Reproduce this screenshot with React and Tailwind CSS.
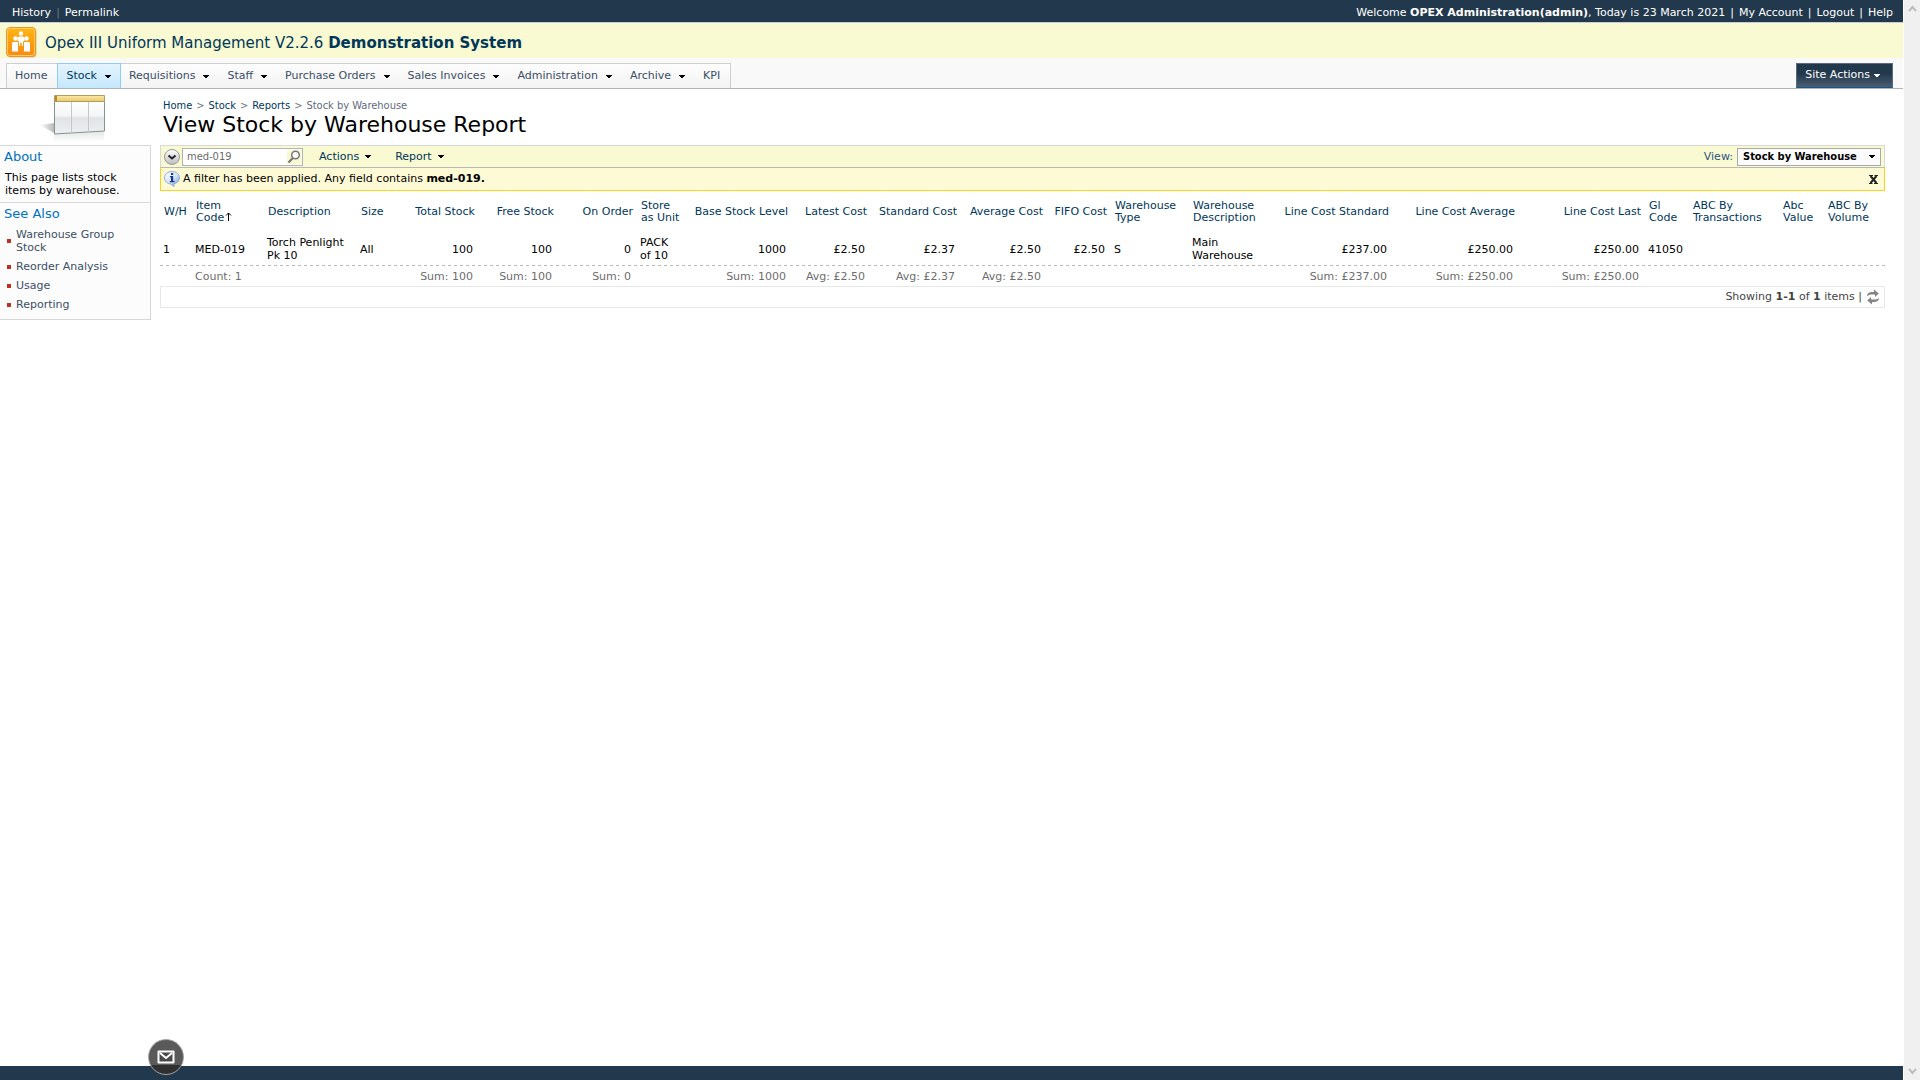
import React from "react";

const SANS = "font-['DejaVu_Sans',Verdana,sans-serif]";
const NARROW = "font-['DejaVu_Sans_Condensed','DejaVu_Sans',Tahoma,sans-serif]";

function Caret({ className = "" }) {
  return (
    <svg width="6" height="4" viewBox="0 0 6 4" className={"shrink-0 " + className} shapeRendering="crispEdges" aria-hidden="true">
      <path d="M0 0h6v1H5v1H4v1H2V2H1V1H0z" fill="currentColor" />
    </svg>
  );
}

function PeopleLogo() {
  return (
    <svg width="32" height="32" viewBox="0 0 32 32" className="self-end" aria-hidden="true">
      <defs>
        <linearGradient id="logo" x1="0" y1="0" x2="0" y2="1">
          <stop offset="0" stopColor="#fcb813" />
          <stop offset="0.6" stopColor="#fb9a0e" />
          <stop offset="1" stopColor="#f98a1a" />
        </linearGradient>
      </defs>
      <rect x="1.5" y="2" width="29" height="29.500" rx="4" fill="#c9c9a8" />
      <rect x="0.5" y="1.5" width="29" height="29" rx="3.5" fill="url(#logo)" stroke="#e9962a" />
      <rect x="1.5" y="2.5" width="27" height="27" rx="2.5" fill="none" stroke="#ffc964" />
      <g fill="#fff">
        <circle cx="9.500" cy="12.500" r="2.200" />
        <circle cx="15" cy="7.500" r="2.200" />
        <circle cx="20.500" cy="12.500" r="2.200" />
        <path d="M6.500 16h5.500v9.500H6V17zM18 16h5.500l.5 1v8.500h-6z" />
        <path d="M11.500 11.500L13 10.500h4l1.500 1v3L17 15.500V20h-1.200v-3h-1.600v3H13v-4.500l-1.500-1z" />
      </g>
    </svg>
  );
}

function ListPicture() {
  return (
    <svg width="68" height="48" viewBox="0 0 68 48" aria-hidden="true">
      <defs>
        <linearGradient id="gold" x1="0" y1="0" x2="0" y2="1">
          <stop offset="0" stopColor="#fbe9a8" />
          <stop offset="1" stopColor="#ecc867" />
        </linearGradient>
        <linearGradient id="pane" x1="0" y1="0" x2="0" y2="1">
          <stop offset="0" stopColor="#ffffff" />
          <stop offset="0.450" stopColor="#f4f5f6" />
          <stop offset="0.500" stopColor="#e2e3e7" />
          <stop offset="1" stopColor="#eeeff2" />
        </linearGradient>
        <linearGradient id="castLeft" x1="1" y1="0" x2="0" y2="0">
          <stop offset="0" stopColor="#b9b9b9" />
          <stop offset="1" stopColor="#ffffff" />
        </linearGradient>
        <linearGradient id="mirror" x1="0" y1="0" x2="0" y2="1">
          <stop offset="0" stopColor="#c5cccb" />
          <stop offset="1" stopColor="#ffffff" />
        </linearGradient>
      </defs>
      <path d="M14 29L0 31l14 8z" fill="url(#castLeft)" />
      <path d="M14 40l50-3v9l-50 2z" fill="url(#mirror)" opacity="0.500" />
      <path d="M14.500 7.500h50V37l-50 3z" fill="url(#pane)" stroke="#83938d" />
      <path d="M31.500 8v31M48.500 8v30" stroke="#c3c8c9" />
      <path d="M14.500 1.500h50v6h-50z" fill="url(#gold)" stroke="#b49c61" />
      <path d="M15 2h2v5h-2z" fill="#b58a2c" />
    </svg>
  );
}

function RoundArrow() {
  return (
    <svg width="16" height="16" viewBox="0 0 16 16" aria-hidden="true">
      <defs>
        <linearGradient id="knob" x1="0" y1="0" x2="0" y2="1">
          <stop offset="0" stopColor="#ffffff" />
          <stop offset="1" stopColor="#bdbdbd" />
        </linearGradient>
      </defs>
      <circle cx="8" cy="8" r="7.500" fill="url(#knob)" stroke="#9b9b9b" />
      <path d="M4.500 6.500L8 9.500l3.500-3" fill="none" stroke="#222" strokeWidth="2" />
    </svg>
  );
}

function Magnifier() {
  return (
    <svg width="14" height="14" viewBox="0 0 14 14" aria-hidden="true">
      <rect width="14" height="14" fill="#f9f9d2" />
      <circle cx="8.500" cy="5" r="3.800" fill="#fff" stroke="#777" strokeWidth="1.500" />
      <path d="M5.800 8L1.500 12.500" stroke="#777" strokeWidth="2.200" />
    </svg>
  );
}

function InfoBubble() {
  return (
    <svg width="16" height="16" viewBox="0 0 16 16" aria-hidden="true">
      <defs>
        <linearGradient id="bubble" x1="0" y1="0" x2="1" y2="1">
          <stop offset="0" stopColor="#ffffff" />
          <stop offset="0.500" stopColor="#dbe7f8" />
          <stop offset="1" stopColor="#6f9bdc" />
        </linearGradient>
      </defs>
      <path d="M8 .5c4.200 0 7.500 2.700 7.500 6.200 0 3.100-2.400 5.400-5.500 6L10 15.500 6.800 13C3.200 12.600.5 10 .5 6.700.5 3.200 3.800.5 8 .5z" fill="url(#bubble)" stroke="#8fa9d3" />
      <path d="M7 2h2.200v2H7zM6 5h3.200v5H10.500v1.200H5.800V10H7V6.200H6z" fill="#12388f" />
    </svg>
  );
}

function Refresh() {
  return (
    <svg width="14" height="16" viewBox="0 0 14 16" aria-hidden="true" fill="#858585">
      <path d="M1 7C1 4 4 2.500 8 3V.5L12.800 4.500 9 8V5.800C5.500 5 3 5.500 1 7z" />
      <path d="M13 9c0 3-3 4.500-7 4v2.500L1.200 11.500 5 8v2.200c3.500.8 6 .3 8-1.200z" />
    </svg>
  );
}

const tabs = [
  { label: "Home" },
  { label: "Stock", menu: true, active: true },
  { label: "Requisitions", menu: true },
  { label: "Staff", menu: true },
  { label: "Purchase Orders", menu: true },
  { label: "Sales Invoices", menu: true },
  { label: "Administration", menu: true },
  { label: "Archive", menu: true },
  { label: "KPI" },
];

const columns = [
  { head: ["W/H"], w: "w-[32px]", value: "1" },
  { head: ["Item", "Code"], w: "w-[72px]", value: "MED-019", total: "Count: 1", sorted: true },
  { head: ["Description"], w: "w-[93px]", value: "Torch Penlight Pk 10" },
  { head: ["Size"], w: "w-[47px]", value: "All" },
  { head: ["Total Stock"], w: "w-[75px]", value: "100", total: "Sum: 100", right: true },
  { head: ["Free Stock"], w: "w-[79px]", value: "100", total: "Sum: 100", right: true },
  { head: ["On Order"], w: "w-[79px]", value: "0", total: "Sum: 0", right: true },
  { head: ["Store", "as Unit"], w: "w-[49px]", value: "PACK of 10" },
  { head: ["Base Stock Level"], w: "w-[106px]", value: "1000", total: "Sum: 1000", right: true },
  { head: ["Latest Cost"], w: "w-[79px]", value: "£2.50", total: "Avg: £2.50", right: true },
  { head: ["Standard Cost"], w: "w-[90px]", value: "£2.37", total: "Avg: £2.37", right: true },
  { head: ["Average Cost"], w: "w-[86px]", value: "£2.50", total: "Avg: £2.50", right: true },
  { head: ["FIFO Cost"], w: "w-[64px]", value: "£2.50", right: true },
  { head: ["Warehouse", "Type"], w: "w-[78px]", value: "S" },
  { head: ["Warehouse", "Description"], w: "w-[81px]", value: "Main Warehouse" },
  { head: ["Line Cost Standard"], w: "w-[123px]", value: "£237.00", total: "Sum: £237.00", right: true },
  { head: ["Line Cost Average"], w: "w-[126px]", value: "£250.00", total: "Sum: £250.00", right: true },
  { head: ["Line Cost Last"], w: "w-[126px]", value: "£250.00", total: "Sum: £250.00", right: true },
  { head: ["Gl", "Code"], w: "w-[44px]", value: "41050" },
  { head: ["ABC By", "Transactions"], w: "w-[90px]", value: "" },
  { head: ["Abc", "Value"], w: "w-[45px]", value: "" },
  { head: ["ABC By", "Volume"], w: "w-[61px]", value: "" },
];

function TopBar() {
  return (
    <div className="flex h-[23px] items-center justify-between border-b border-[#c3d0dc] bg-[#22384d] pt-1 pr-[10px] pl-3 text-white">
      <div className="flex items-center">
        <a href="#history">History</a>
        <span className="px-[5px] text-[#6b7885]">|</span>
        <a href="#permalink">Permalink</a>
      </div>
      <div className="flex items-center gap-[5px]">
        <span>Welcome <b>OPEX Administration(admin)</b>, Today is 23 March 2021</span>
        <span>|</span>
        <a href="#account">My Account</a>
        <span>|</span>
        <a href="#logout">Logout</a>
        <span>|</span>
        <a href="#help">Help</a>
      </div>
    </div>
  );
}

function NavBar() {
  return (
    <div className="flex h-[31px] items-end justify-between border-b border-[#b3b3b3] bg-[#f9f9f9] pr-[10px] pl-[6px]">
      <nav className="flex h-[25px] items-stretch border-x border-t border-[#cfcfcf] bg-linear-to-b from-[#fdfdfd] to-[#f3f3f3] text-[#3b4f65]">
        {tabs.map((t) =>
          t.active ? (
            <button key={t.label} className="-mt-px flex items-center gap-2 border border-b-0 border-[#91cdf2] bg-linear-to-b from-[#e4f4fe] to-[#c4e8fd] pt-px pr-[9px] pl-2 text-[#003759]">
              {t.label}
              <Caret className="text-black" />
            </button>
          ) : t.menu ? (
            <button key={t.label} className="flex items-center gap-2 pt-px pr-[10px] pl-2">
              {t.label}
              <Caret className="text-black" />
            </button>
          ) : (
            <a key={t.label} href={"#" + t.label} className="flex items-center pt-px pr-[10px] pl-2">
              {t.label}
            </a>
          )
        )}
      </nav>
      <button className="flex h-[25px] items-center gap-1 border border-[#5a6b7c] border-b-[#0b5a94] bg-linear-to-b from-[#22384d] from-40% to-[#4c5d6f] pr-3 pl-2 text-white">
        Site Actions
        <Caret />
      </button>
    </div>
  );
}

function SideBar() {
  const links = ["Warehouse Group Stock", "Reorder Analysis", "Usage", "Reporting"];
  return (
    <aside className="w-[151px] shrink-0">
      <div className="flex h-[56px] items-start pt-[5px] pl-[40px]">
        <ListPicture />
      </div>
      <div className="border border-l-0 border-[#d8d8d8] bg-[#fcfcfc]">
        <section className="h-[57px] border-b border-[#d8d8d8] pt-[3px] pl-1">
          <h2 className="text-[13px] leading-4 text-[#0072bc]">About</h2>
          <p className="pt-[6px] pr-4 pl-px leading-[13px] text-black">This page lists stock items by warehouse.</p>
        </section>
        <section className="pt-[3px] pb-2 pl-1">
          <h2 className="text-[13px] leading-4 text-[#0072bc]">See Also</h2>
          <ul className="flex flex-col gap-[6px] pt-[6px]">
            {links.map((l) => (
              <li key={l} className="flex items-center gap-[5px] pr-5 pl-[3px] leading-[13px]">
                <span className="h-1 w-1 shrink-0 bg-[#c2301c]" />
                <a href={"#" + l} className="text-[#3b4f65]">{l}</a>
              </li>
            ))}
          </ul>
        </section>
      </div>
    </aside>
  );
}

function ToolBar() {
  return (
    <div className="flex h-[22px] items-center border-x border-t border-[#d8d8d8] bg-[#f9f9d2] text-[#003759]">
      <button aria-label="Search options" className="ml-[3px]"><RoundArrow /></button>
      <div className="ml-[2px] flex h-[18px] w-[121px] items-center border border-[#b3b3b3] bg-white pr-px">
        <input aria-label="Search" defaultValue="med-019" className={"min-w-0 flex-1 pt-px pl-1 text-[#6b6b6b] outline-none " + NARROW} />
        <button aria-label="Find"><Magnifier /></button>
      </div>
      <button className="ml-4 flex items-center gap-[6px] pt-px">Actions <Caret className="text-black" /></button>
      <button className="ml-6 flex items-center gap-[6px] pt-px">Report <Caret className="text-black" /></button>
      <label htmlFor="view" className="ml-auto pt-px pr-1 text-[#2a5580]">View:</label>
      <div className="relative mr-[3px] flex items-center text-black">
        <select id="view" className={"h-[18px] w-[144px] appearance-none border border-[#aaaaaa] bg-[#fbfbfb] pl-[5px] text-[11px] font-bold " + NARROW}>
          <option>Stock by Warehouse</option>
        </select>
        <Caret className="pointer-events-none absolute right-[6px]" />
      </div>
    </div>
  );
}

function ReportTable() {
  return (
    <table className="w-full table-fixed border-collapse">
      <thead>
        <tr className="h-[41px] leading-3 text-[#003759]">
          {columns.map((c, i) => (
            <th key={i} scope="col" className={"px-1 align-middle font-normal whitespace-nowrap " + c.w + (c.right ? " text-right" : " text-left")}>
              {c.head.map((h, k) => (
                <span key={k} className="block">
                  {h}
                  {c.sorted && k === 1 && (
                    <svg width="7" height="9" viewBox="0 0 7 9" className="ml-px inline-block align-baseline" aria-hidden="true">
                      <path d="M3.500 9V1M1 3.500L3.500 1 6 3.500" fill="none" stroke="#000" />
                    </svg>
                  )}
                </span>
              ))}
            </th>
          ))}
        </tr>
      </thead>
      <tbody>
        <tr className="h-[34px] bg-[repeating-linear-gradient(90deg,#b9b9b9_0_3px,transparent_3px_6px)] bg-[length:100%_1px] bg-bottom bg-no-repeat leading-[13px] text-black">
          {columns.map((c, i) => (
            <td key={i} className={"pr-[6px] pl-[3px] align-middle" + (c.right ? " text-right" : "")}>{c.value}</td>
          ))}
        </tr>
      </tbody>
      <tfoot>
        <tr className="h-[20px] leading-[13px] text-[#6d6d6d]">
          {columns.map((c, i) => (
            <td key={i} className={"pt-px pr-[6px] pl-[3px] align-middle whitespace-nowrap" + (c.right ? " text-right" : "")}>{c.total}</td>
          ))}
        </tr>
      </tfoot>
    </table>
  );
}

export default function App() {
  return (
    <div className={"flex min-h-screen bg-white text-[11px] " + SANS}>
      <div className="flex min-w-0 flex-1 flex-col">
        <header>
          <TopBar />
          <div className="flex h-[35px] items-center gap-[7px] bg-[#f9f9d2] pl-[6px] text-[15px] text-[#003759]">
            <PeopleLogo />
            <p className="pt-[5px]">Opex III Uniform Management V2.2.6 <b>Demonstration System</b></p>
          </div>
          <NavBar />
        </header>
        <div className="flex flex-1">
          <SideBar />
          <main className="ml-[9px] min-w-0 flex-1 pr-[18px]">
            <div className="h-[56px] pt-[10px] pl-[3px]">
              <nav aria-label="Breadcrumb" className={"flex gap-1 leading-[14px] text-[#003759] " + NARROW}>
                <a href="#home">Home</a>
                <span className="text-[#6b7885]">&gt;</span>
                <a href="#stock">Stock</a>
                <span className="text-[#6b7885]">&gt;</span>
                <a href="#reports">Reports</a>
                <span className="text-[#6b7885]">&gt;</span>
                <span className="text-[#5f6b80]">Stock by Warehouse</span>
              </nav>
              <h1 className="text-[22px] leading-6 text-black">View Stock by Warehouse Report</h1>
            </div>
            <ToolBar />
            <div className="flex h-[24px] items-center border border-[#fbd21c] border-t-[#b8b8b8] bg-[#fffad6] pr-[6px] pl-[3px] text-black">
              <InfoBubble />
              <p className="pl-[3px]">A filter has been applied. Any field contains <b>med-019.</b></p>
              <button aria-label="Remove filter" className="ml-auto">
                <svg width="9" height="9" viewBox="0 0 9 9" aria-hidden="true">
                  <path d="M1.500 1l6 7M7.500 1l-6 7" stroke="#222" strokeWidth="2" />
                  <path d="M0 .5h4M5.500.5H9M0 8.500h3.500M5 8.500h4" stroke="#222" />
                </svg>
              </button>
            </div>
            <ReportTable />
            <div className="flex h-[22px] items-center justify-end gap-1 border border-[#e8e8e8] pr-1 text-[#444444]">
              <span>Showing <b>1-1</b> of <b>1</b> items |</span>
              <button aria-label="Refresh"><Refresh /></button>
            </div>
          </main>
        </div>
        <footer className="h-[14px] bg-[#22384d]" />
      </div>
      <div className="flex w-[17px] shrink-0 flex-col items-center justify-between border-l border-white bg-[#f0f0f0] py-[5px]">
        <svg width="9" height="7" viewBox="0 0 9 7" aria-hidden="true"><path d="M1 6l3.500-4L8 6" fill="none" stroke="#bdbdbd" strokeWidth="2" /></svg>
        <svg width="9" height="7" viewBox="0 0 9 7" aria-hidden="true"><path d="M1 1l3.500 4L8 1" fill="none" stroke="#bdbdbd" strokeWidth="2" /></svg>
      </div>
      <button aria-label="Messages" className="fixed bottom-[5px] left-[148px] flex h-9 w-9 items-center justify-center rounded-full border border-[#a5a5a5] bg-linear-to-b from-[#5a5a5a] from-75% to-[#303030] to-75%">
        <svg width="18" height="14" viewBox="0 0 18 14" aria-hidden="true">
          <rect x="0.500" y="0.500" width="17" height="13" rx="1" fill="#fff" />
          <rect x="2.500" y="2.500" width="13" height="9" fill="#4a4a4a" />
          <path d="M3 3l6 5 6-5" fill="none" stroke="#fff" strokeWidth="2" />
        </svg>
      </button>
    </div>
  );
}
